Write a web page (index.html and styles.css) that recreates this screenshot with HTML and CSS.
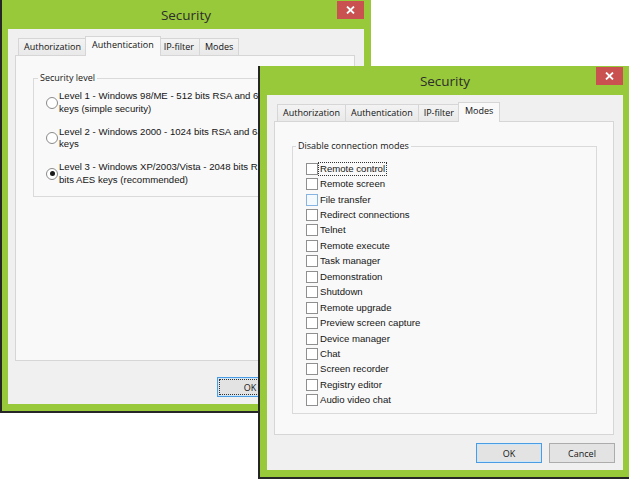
FILE: index.html
```html
<!DOCTYPE html>
<html>
<head>
<meta charset="utf-8">
<title>Security</title>
<link rel="stylesheet" href="styles.css">
</head>
<body>
<div class="desktop">
  <section class="dlg dlg-auth">
    <header class="titlebar">
      <span class="title">Security</span>
      <span class="close"><svg width="9" height="8" viewBox="0 0 9 8"><path d="M1 0.5 L8 7.5 M8 0.5 L1 7.5" stroke="#fff" stroke-width="1.8"/></svg></span>
    </header>
    <div class="client">
      <div class="tabs">
        <span class="tab">Authorization</span>
        <span class="tab sel">Authentication</span>
        <span class="tab">IP-filter</span>
        <span class="tab">Modes</span>
      </div>
      <div class="panel">
        <fieldset class="group g-level">
          <legend>Security level</legend>
          <div class="opt"><span class="radio"></span><span class="opt-text">Level 1 - Windows 98/ME - 512 bits RSA and 64 bits AES<br>keys (simple security)</span></div>
          <div class="opt"><span class="radio"></span><span class="opt-text">Level 2 - Windows 2000 - 1024 bits RSA and 64 bits AES<br>keys</span></div>
          <div class="opt"><span class="radio on"></span><span class="opt-text">Level 3 - Windows XP/2003/Vista - 2048 bits RSA and 256<br>bits AES keys (recommended)</span></div>
        </fieldset>
      </div>
      <div class="footer footer-wide">
        <button class="btn def focus">OK</button>
      </div>
    </div>
  </section>

  <section class="dlg dlg-modes">
    <header class="titlebar">
      <span class="title">Security</span>
      <span class="close"><svg width="9" height="8" viewBox="0 0 9 8"><path d="M1 0.5 L8 7.5 M8 0.5 L1 7.5" stroke="#fff" stroke-width="1.8"/></svg></span>
    </header>
    <div class="client">
      <div class="tabs">
        <span class="tab">Authorization</span>
        <span class="tab">Authentication</span>
        <span class="tab">IP-filter</span>
        <span class="tab sel">Modes</span>
      </div>
      <div class="panel">
        <fieldset class="group g-modes">
          <legend>Disable connection modes</legend>
          <div class="check-row"><span class="box"></span><span class="lbl focus">Remote control</span></div>
          <div class="check-row"><span class="box"></span><span class="lbl">Remote screen</span></div>
          <div class="check-row"><span class="box hover"></span><span class="lbl">File transfer</span></div>
          <div class="check-row"><span class="box"></span><span class="lbl">Redirect connections</span></div>
          <div class="check-row"><span class="box"></span><span class="lbl">Telnet</span></div>
          <div class="check-row"><span class="box"></span><span class="lbl">Remote execute</span></div>
          <div class="check-row"><span class="box"></span><span class="lbl">Task manager</span></div>
          <div class="check-row"><span class="box"></span><span class="lbl">Demonstration</span></div>
          <div class="check-row"><span class="box"></span><span class="lbl">Shutdown</span></div>
          <div class="check-row"><span class="box"></span><span class="lbl">Remote upgrade</span></div>
          <div class="check-row"><span class="box"></span><span class="lbl">Preview screen capture</span></div>
          <div class="check-row"><span class="box"></span><span class="lbl">Device manager</span></div>
          <div class="check-row"><span class="box"></span><span class="lbl">Chat</span></div>
          <div class="check-row"><span class="box"></span><span class="lbl">Screen recorder</span></div>
          <div class="check-row"><span class="box"></span><span class="lbl">Registry editor</span></div>
          <div class="check-row"><span class="box"></span><span class="lbl">Audio video chat</span></div>
        </fieldset>
      </div>
      <div class="footer">
        <button class="btn def">OK</button>
        <button class="btn">Cancel</button>
      </div>
    </div>
  </section>
</div>
</body>
</html>
```

FILE: styles.css
```css
* { box-sizing: border-box; }
html, body { margin: 0; padding: 0; }
body {
  width: 631px;
  height: 480px;
  background: #ffffff;
  overflow: hidden;
  font-family: "Liberation Sans", Arial, sans-serif;
  font-size: 9.6px;
  color: #151515;
}
.desktop { position: relative; width: 631px; height: 480px; }

.dlg {
  position: absolute;
  width: 371px;
  height: 413px;
  display: flex;
  flex-direction: column;
  background: #98c93a;
  border-left: 2px solid #262626;
  border-bottom: 2px solid #262626;
}
.dlg-auth { left: 0; top: 0; padding: 0 7px 7px 6px; }
.dlg-modes { left: 258px; top: 66px; padding: 0 6px 7px 7px; z-index: 2; }

.titlebar {
  height: 29px;
  flex: none;
  display: grid;
  grid-template-columns: 1fr auto 1fr;
  align-items: center;
}
.title {
  grid-column: 2;
  font-family: "Open Sans", sans-serif;
  font-size: 13.5px;
  color: #2e2e2e;
  line-height: 18px;
}
.close {
  grid-column: 3;
  justify-self: end;
  align-self: start;
  margin-top: 1px;
  width: 27px;
  height: 18px;
  background: #c9514f;
  display: flex;
  align-items: center;
  justify-content: center;
}

.client {
  flex: 1;
  min-height: 0;
  background: #f0f0f0;
  display: flex;
  flex-direction: column;
  padding-top: 7px;
}

.tabs {
  display: flex;
  align-items: flex-end;
  height: 19px;
  padding-left: 10px;
  flex: none;
}
.tab {
  height: 17px;
  padding: 0 5px;
  border: 1px solid #d6d6d6;
  border-bottom: none;
  background: linear-gradient(#f3f3f3, #e9e9e9);
  font-family: "Open Sans", sans-serif;
  font-size: 9px;
  line-height: 16px;
  color: #111;
  white-space: nowrap;
}
.tab + .tab { margin-left: -1px; }
.tab.sel {
  position: relative;
  z-index: 1;
  height: 20px;
  margin: 0 -2px -1px -2px;
  padding: 0 6px 3px;
  background: #f9f9f9;
  line-height: 16px;
}

.panel {
  flex: 1;
  min-height: 0;
  margin: 0 9px 0 7px;
  background: #f9f9f9;
  border: 1px solid #d6d6d6;
  overflow: hidden;
}

.group {
  border: 1px solid #dadada;
  min-width: 0;
}
.group legend {
  font-family: "Open Sans", sans-serif;
  font-size: 9px;
  line-height: 12px;
  padding: 0 2px;
  color: #151515;
}
.g-level { margin: 16px 17px 0 17px; padding: 6px 0 10px 12px; }
.g-level legend { margin-left: -8px; }
.g-modes { margin: 18px 16px 0 17px; padding: 9px 0 5px 13px; }
.g-modes legend { margin-left: -10px; }

.opt {
  display: flex;
  align-items: center;
  gap: 1px;
  line-height: 12.5px;
  white-space: nowrap;
}
.opt + .opt { margin-top: 10.5px; }
.radio {
  flex: none;
  width: 12px;
  height: 12px;
  border-radius: 50%;
  border: 1px solid #8a8a8a;
  background: #fff;
  display: flex;
  align-items: center;
  justify-content: center;
}
.radio.on::after {
  content: "";
  width: 5px;
  height: 5px;
  border-radius: 50%;
  background: #1a1a1a;
}

.check-row {
  display: flex;
  align-items: center;
  height: 15.45px;
  white-space: nowrap;
}
.box {
  flex: none;
  width: 12px;
  height: 12px;
  border: 1px solid #8f8f8f;
  background: #fff;
  margin-right: 1px;
}
.box.hover { border-color: #86b3df; background: #f4f9fe; }
.lbl { padding: 0 1px; line-height: 12px; }
.lbl.focus { outline: 1px dotted #333; outline-offset: 0; }

.footer {
  flex: none;
  display: flex;
  justify-content: flex-end;
  gap: 7px;
  padding: 8px 8px 7px 0;
}
.footer-wide { padding-top: 16px; padding-right: 81px; }
.btn {
  width: 66px;
  height: 20px;
  padding: 0;
  margin: 0;
  background: #e3e3e3;
  border: 1px solid #acacac;
  font-family: "Open Sans", sans-serif;
  font-size: 9px;
  color: #151515;
}
.btn.def { border-color: #4a9de3; box-shadow: inset 0 0 0 1px #cfe5f8; }
.btn.focus { outline: 1px dotted #333; outline-offset: -3px; }
```
